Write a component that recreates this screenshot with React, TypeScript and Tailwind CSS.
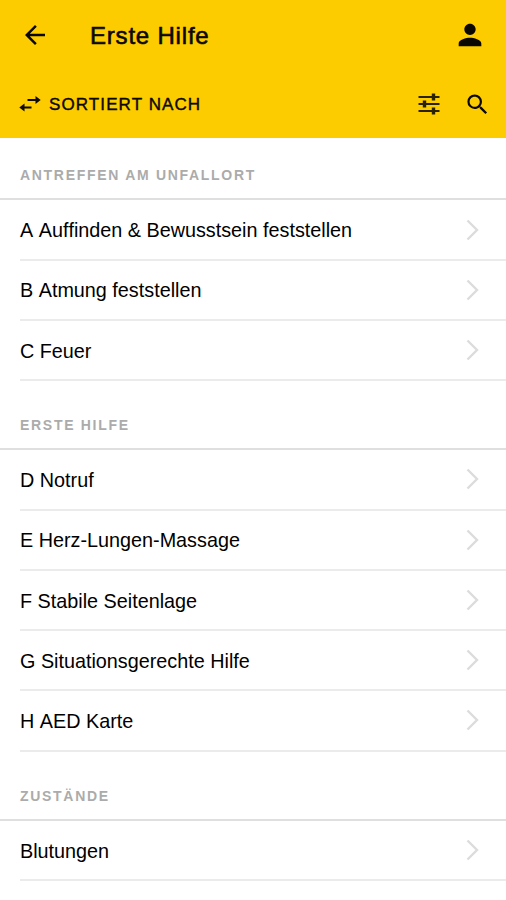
import React from 'react';
import { MdArrowBack, MdPerson, MdSearch } from 'react-icons/md';

interface Section {
    title: string;
    items: string[];
}

const sections: Section[] = [
    {
        title: 'Antreffen am Unfallort',
        items: ['A Auffinden & Bewusstsein feststellen', 'B Atmung feststellen', 'C Feuer'],
    },
    {
        title: 'Erste Hilfe',
        items: [
            'D Notruf',
            'E Herz-Lungen-Massage',
            'F Stabile Seitenlage',
            'G Situationsgerechte Hilfe',
            'H AED Karte',
        ],
    },
    {
        title: 'Zustände',
        items: ['Blutungen'],
    },
];

const SortIcon: React.FC = () => (
    <svg width="22" height="16" viewBox="0 0 22 16" fill="none">
        <path d="M8.5 4h10M4 11.5h8.5" stroke="#0d0a00" strokeWidth="2" />
        <path d="M16.5 0l5.2 4-5.2 4zM5.5 7.5l-5.2 4 5.2 4z" fill="#0d0a00" />
    </svg>
);

const FilterIcon: React.FC = () => (
    <svg width="22" height="22" viewBox="0 0 22 22" fill="none" stroke="#2b2300">
        <path d="M.5 4h21M.5 11h21M.5 18h21" strokeWidth="1.8" />
        <path d="M15.5 .5v7M6.5 7.5v7M15.5 14.5v7" strokeWidth="3.4" />
    </svg>
);

const Chevron: React.FC = () => (
    <svg width="14" height="22" viewBox="0 0 14 22" fill="none" className="shrink-0">
        <path d="M1.5 1.5l9.5 9.5-9.5 9.5" stroke="#dcdcdc" strokeWidth="2.4" />
    </svg>
);

const App: React.FC = () => {
    return (
        <div className="h-[900px] w-full overflow-hidden bg-white font-['Liberation_Sans',sans-serif] text-black">
            <header className="h-[138px] bg-[#fdcc00] text-[#0a0800]">
                <div className="flex h-[70px] items-center pl-5 pr-[19px]">
                    <button aria-label="Zurück"><MdArrowBack size={30} /></button>
                    <h1 className="ml-10 flex-1 pt-0.5 text-[24px] leading-8 tracking-[0.8px] [-webkit-text-stroke:0.6px_#0a0800]">Erste Hilfe</h1>
                    <button aria-label="Profil"><MdPerson size={34} /></button>
                </div>
                <div className="flex h-[68px] items-center pl-[19px] pr-[15px]">
                    <button className="flex flex-1 items-center gap-2">
                        <SortIcon />
                        <span className="pt-0.5 text-[17px] uppercase leading-6 tracking-[1.1px] [-webkit-text-stroke:0.4px_#0a0800]">Sortiert nach</span>
                    </button>
                    <button aria-label="Filter" className="mr-6"><FilterIcon /></button>
                    <button aria-label="Suche"><MdSearch size={27} /></button>
                </div>
            </header>

            <main>
                {sections.map((section, index) => (
                    <section key={section.title}>
                        <h2
                            className={`flex items-end border-b-2 border-[#dfdfdf] pb-3.5 pl-5 text-[14px] font-bold uppercase leading-[18px] tracking-[1.7px] text-[#ababab] ${
                                index === 0 ? 'h-[62.4px]' : 'h-[69.2px]'
                            }`}
                        >
                            {section.title}
                        </h2>
                        <ul className="pl-5">
                            {section.items.map((item) => (
                                <li key={item} className="flex h-[60.25px] items-center justify-between border-b-2 border-[#ebebeb] pr-[26px] text-[19.8px] [font-kerning:none]">
                                    <span className="pt-[3px]">{item}</span>
                                    <Chevron />
                                </li>
                            ))}
                        </ul>
                    </section>
                ))}
            </main>
        </div>
    );
};

export default App;
